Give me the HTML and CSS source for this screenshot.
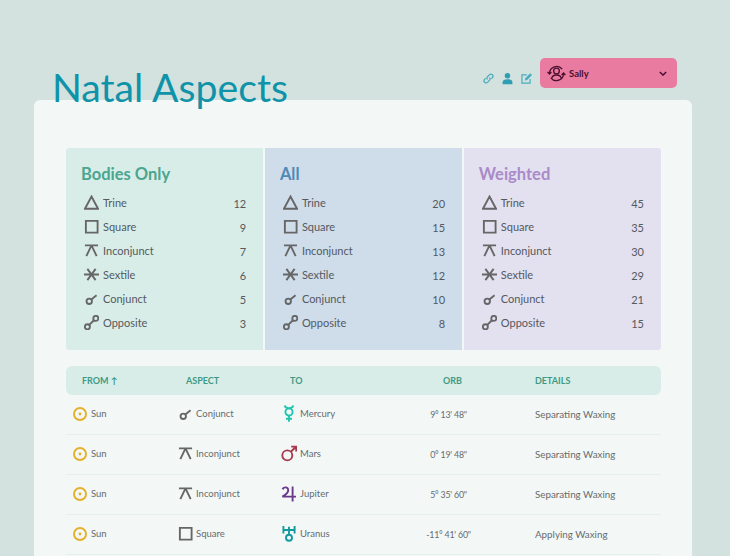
FILE: index.html
```html
<!DOCTYPE html>
<html>
<head>
    <title>Natal Aspects</title>
    <meta charset="utf-8">
    <link rel="stylesheet" href="styles.css">
</head>
<body>
    <svg class="icon-defs" width="0" height="0">
        <symbol id="trine" viewBox="0 0 16 16"><path d="M8 1.6 15 14.6H1Z"/></symbol>
        <symbol id="square" viewBox="0 0 16 16"><path d="M2 2H14.5V14.5H2Z"/></symbol>
        <symbol id="inconjunct" viewBox="0 0 16 16"><path d="M1 2.5H15M8 2.5 2.5 14M8 2.5 13.5 14"/></symbol>
        <symbol id="sextile" viewBox="0 0 16 16"><path d="M0 8H16M3.6 2 12.4 14M12.4 2 3.6 14"/></symbol>
        <symbol id="conjunct" viewBox="0 0 16 16"><circle cx="5.6" cy="11" r="2.9"/><path d="M7.8 9 13.4 4.6"/></symbol>
        <symbol id="opposite" viewBox="0 0 16 16"><circle cx="3.6" cy="12.6" r="2.7"/><circle cx="12.6" cy="3.6" r="2.7"/><path d="M5.6 10.6 10.6 5.6"/></symbol>
        <symbol id="sun" viewBox="0 0 16 16"><circle cx="8" cy="8" r="6.9"/><circle class="dot" cx="8" cy="8" r="1.6"/></symbol>
        <symbol id="mercury" viewBox="0 0 16 17"><circle cx="8" cy="7" r="3.6"/><path d="M3.6 .6C4.2 2.6 6 3.4 8 3.4S11.8 2.6 12.4 .6M8 10.6V16.8M5 13.8H11"/></symbol>
        <symbol id="mars" viewBox="0 0 16 17"><circle cx="6.3" cy="10.4" r="5"/><path d="M9.8 6.8 15 1.8M10.2 1.6H15.2V6.4"/></symbol>
        <symbol id="jupiter" viewBox="0 0 16 17"><path d="M1.6 4.4C2.4 1.8 7 1.4 7.2 5 7.4 8 4 10.2 1.4 11.6H15M11.6 1.4V16.4"/></symbol>
        <symbol id="uranus" viewBox="0 0 16 17"><circle cx="8" cy="12.8" r="3"/><path d="M8 9.8V1.8M2.4 1V8.4M13.6 1V8.4M2.4 5H13.6"/></symbol>
    </svg>

    <header class="page-head">
        <h1>Natal Aspects</h1>
        <div class="head-tools">
            <svg class="tool-icon" viewBox="0 0 16 16"><path d="M6.8 9.2C5.6 8 6 6.6 7 5.6L9 3.6C10.2 2.4 11.8 2.4 12.8 3.4S13.8 6 12.6 7.2L11.4 8.4M9.2 6.8C10.4 8 10 9.4 9 10.4L7 12.4C5.8 13.6 4.2 13.6 3.2 12.6S2.2 10 3.4 8.8L4.6 7.6"/></svg>
            <svg class="tool-icon tool-solid" viewBox="0 0 16 16"><circle cx="8" cy="4.6" r="3.4"/><path d="M2 15V12.6C2 10.2 4 9 8 9S14 10.2 14 12.6V15Z"/></svg>
            <svg class="tool-icon" viewBox="0 0 16 16"><path d="M12.4 8.6V13.6H2.4V3.6H8.4"/><path class="tool-pen" d="M6 10.6 6.6 7.6 12.6 1.6 14.8 3.8 8.8 9.8Z"/></svg>
            <div class="user-select">
                <svg class="user-icon" viewBox="0 0 20 20"><circle cx="10" cy="7.4" r="3"/><path d="M4.8 15.6C5.4 12.6 7.4 11.6 10 11.6S14.6 12.6 15.2 15.6M2.6 10A7.5 7.5 0 0 1 16 5.4M17.4 10A7.5 7.5 0 0 1 4 14.6M.6 8.4 2.6 10.6 4.6 8.4M15.4 11.6 17.4 9.4 19.4 11.6"/></svg>
                <span class="user-name">Sally</span>
                <svg class="user-caret" viewBox="0 0 10 6"><path d="M1 1 5 5 9 1"/></svg>
            </div>
        </div>
    </header>

    <main class="card">
        <section class="totals">
            <div class="total-panel panel-bodies">
                <h2>Bodies Only</h2>
                <div class="total-row"><svg class="aspect-icon"><use href="#trine"/></svg><span class="total-name">Trine</span><span class="total-num">12</span></div>
                <div class="total-row"><svg class="aspect-icon"><use href="#square"/></svg><span class="total-name">Square</span><span class="total-num">9</span></div>
                <div class="total-row"><svg class="aspect-icon"><use href="#inconjunct"/></svg><span class="total-name">Inconjunct</span><span class="total-num">7</span></div>
                <div class="total-row"><svg class="aspect-icon"><use href="#sextile"/></svg><span class="total-name">Sextile</span><span class="total-num">6</span></div>
                <div class="total-row"><svg class="aspect-icon"><use href="#conjunct"/></svg><span class="total-name">Conjunct</span><span class="total-num">5</span></div>
                <div class="total-row"><svg class="aspect-icon"><use href="#opposite"/></svg><span class="total-name">Opposite</span><span class="total-num">3</span></div>
            </div>
            <div class="total-panel panel-all">
                <h2>All</h2>
                <div class="total-row"><svg class="aspect-icon"><use href="#trine"/></svg><span class="total-name">Trine</span><span class="total-num">20</span></div>
                <div class="total-row"><svg class="aspect-icon"><use href="#square"/></svg><span class="total-name">Square</span><span class="total-num">15</span></div>
                <div class="total-row"><svg class="aspect-icon"><use href="#inconjunct"/></svg><span class="total-name">Inconjunct</span><span class="total-num">13</span></div>
                <div class="total-row"><svg class="aspect-icon"><use href="#sextile"/></svg><span class="total-name">Sextile</span><span class="total-num">12</span></div>
                <div class="total-row"><svg class="aspect-icon"><use href="#conjunct"/></svg><span class="total-name">Conjunct</span><span class="total-num">10</span></div>
                <div class="total-row"><svg class="aspect-icon"><use href="#opposite"/></svg><span class="total-name">Opposite</span><span class="total-num">8</span></div>
            </div>
            <div class="total-panel panel-weighted">
                <h2>Weighted</h2>
                <div class="total-row"><svg class="aspect-icon"><use href="#trine"/></svg><span class="total-name">Trine</span><span class="total-num">45</span></div>
                <div class="total-row"><svg class="aspect-icon"><use href="#square"/></svg><span class="total-name">Square</span><span class="total-num">35</span></div>
                <div class="total-row"><svg class="aspect-icon"><use href="#inconjunct"/></svg><span class="total-name">Inconjunct</span><span class="total-num">30</span></div>
                <div class="total-row"><svg class="aspect-icon"><use href="#sextile"/></svg><span class="total-name">Sextile</span><span class="total-num">29</span></div>
                <div class="total-row"><svg class="aspect-icon"><use href="#conjunct"/></svg><span class="total-name">Conjunct</span><span class="total-num">21</span></div>
                <div class="total-row"><svg class="aspect-icon"><use href="#opposite"/></svg><span class="total-name">Opposite</span><span class="total-num">15</span></div>
            </div>
        </section>

        <section class="aspects">
            <div class="aspect-row aspect-head">
                <div class="col-from">FROM ↑</div>
                <div class="col-aspect">ASPECT</div>
                <div class="col-to">TO</div>
                <div class="col-orb">ORB</div>
                <div class="col-details">DETAILS</div>
            </div>
            <div class="aspect-row">
                <div class="col-from"><svg class="body-icon ic-sun"><use href="#sun"/></svg>Sun</div>
                <div class="col-aspect"><svg class="aspect-icon"><use href="#conjunct"/></svg>Conjunct</div>
                <div class="col-to"><svg class="body-icon ic-mercury"><use href="#mercury"/></svg>Mercury</div>
                <div class="col-orb">9° 13' 48"</div>
                <div class="col-details">Separating Waxing</div>
            </div>
            <div class="aspect-row">
                <div class="col-from"><svg class="body-icon ic-sun"><use href="#sun"/></svg>Sun</div>
                <div class="col-aspect"><svg class="aspect-icon"><use href="#inconjunct"/></svg>Inconjunct</div>
                <div class="col-to"><svg class="body-icon ic-mars"><use href="#mars"/></svg>Mars</div>
                <div class="col-orb">0° 19' 48"</div>
                <div class="col-details">Separating Waxing</div>
            </div>
            <div class="aspect-row">
                <div class="col-from"><svg class="body-icon ic-sun"><use href="#sun"/></svg>Sun</div>
                <div class="col-aspect"><svg class="aspect-icon"><use href="#inconjunct"/></svg>Inconjunct</div>
                <div class="col-to"><svg class="body-icon ic-jupiter"><use href="#jupiter"/></svg>Jupiter</div>
                <div class="col-orb">5° 35' 60"</div>
                <div class="col-details">Separating Waxing</div>
            </div>
            <div class="aspect-row">
                <div class="col-from"><svg class="body-icon ic-sun"><use href="#sun"/></svg>Sun</div>
                <div class="col-aspect"><svg class="aspect-icon"><use href="#square"/></svg>Square</div>
                <div class="col-to"><svg class="body-icon ic-uranus"><use href="#uranus"/></svg>Uranus</div>
                <div class="col-orb">-11° 41' 60"</div>
                <div class="col-details">Applying Waxing</div>
            </div>
        </section>
    </main>
</body>
</html>
```

FILE: styles.css
```css
html, body {
    height: 100%;
    overflow: hidden;
}
body {
    margin: 0;
    background-color: #d3e2df;
    font-family: "Lato", "Liberation Sans", sans-serif;
    color: #54595f;
}
svg {
    fill: none;
    stroke: currentColor;
}
.icon-defs {
    position: absolute;
}
.page-head {
    display: flex;
    justify-content: space-between;
    align-items: flex-start;
    height: 100px;
    padding: 58px 53px 0 52px;
    box-sizing: border-box;
}
h1 {
    position: relative;
    z-index: 1;
    margin: 0;
    font-size: 39.2px;
    line-height: 58px;
    font-weight: 400;
    color: #0f93a8;
}
.head-tools {
    display: flex;
    align-items: center;
}
.tool-icon {
    width: 13px;
    height: 13px;
    margin-right: 6px;
    margin-top: 10px;
    stroke-width: 1.5;
    color: #49adc0;
}
.tool-solid {
    fill: #2f9db2;
    stroke: none;
}
.tool-pen {
    fill: #49adc0;
    stroke: none;
}
.user-select {
    display: flex;
    align-items: center;
    width: 137px;
    height: 30px;
    margin-left: 1px;
    padding: 0 9px 0 7px;
    box-sizing: border-box;
    background-color: #ea7ba0;
    border-radius: 5px;
    color: #4a1030;
}
.user-icon {
    width: 19px;
    height: 19px;
    stroke-width: 1.4;
}
.user-name {
    flex: 1;
    margin-left: 3px;
    font-size: 9.5px;
    font-weight: 700;
}
.user-caret {
    width: 8px;
    height: 5px;
    margin-right: 1px;
    stroke-width: 1.8;
}
.card {
    height: 456px;
    margin: 0 38px 0 34px;
    padding: 48px 31px 0 32px;
    box-sizing: border-box;
    background-color: #f3f8f7;
    border-radius: 6px 6px 0 0;
}
.totals {
    display: grid;
    grid-template-columns: 1fr 1fr 1fr;
    gap: 1.7px;
    height: 202px;
    margin-bottom: 16px;
}
.total-panel {
    padding: 16px 17px 0 15px;
}
.panel-bodies {
    background-color: #d9ede8;
    border-radius: 3px 0 0 3px;
}
.panel-all {
    background-color: #cfdcea;
}
.panel-weighted {
    background-color: #e3e0f0;
    border-radius: 0 3px 3px 0;
}
h2 {
    margin: 0 0 6px 0;
    font-size: 16.5px;
    line-height: 20px;
    font-weight: 700;
}
.panel-bodies h2 {
    color: #4ba58f;
}
.panel-all h2 {
    color: #4f8ab5;
}
.panel-weighted h2 {
    color: #a98bc8;
}
.total-row {
    display: flex;
    align-items: center;
    height: 24px;
    font-size: 11px;
    padding-left: 3px;
}
.total-name {
    flex: 1;
    margin-left: 4px;
}
.total-num {
    padding-top: 2px;
}
.aspect-icon {
    width: 15px;
    height: 15px;
    flex: none;
    stroke-width: 2;
    color: #666666;
}
.aspect-row {
    display: flex;
    align-items: center;
    height: 40px;
    border-bottom: 1px solid #e3f0ec;
    box-sizing: border-box;
    font-size: 9.5px;
    color: #666b70;
}
.aspect-head {
    height: 29px;
    background-color: #d9ede8;
    border: none;
    border-radius: 6px;
    font-size: 9px;
    font-weight: 700;
    color: #3f9a85;
}
.col-from, .col-aspect, .col-to {
    display: flex;
    align-items: center;
    gap: 4px;
    padding-bottom: 2px;
    box-sizing: border-box;
}
.aspect-head .col-from, .aspect-head .col-aspect, .aspect-head .col-to {
    padding-bottom: 0;
}
.col-from {
    width: 112px;
    padding-left: 7px;
}
.col-aspect {
    width: 104px;
    gap: 3px;
}
.col-to {
    width: 136px;
    gap: 3px;
}
.col-orb {
    width: 61px;
    font-size: 8.8px;
    letter-spacing: -0.2px;
    text-align: center;
}
.col-details {
    margin-left: 56px;
    padding-bottom: 1px;
    font-size: 9.8px;
}
.aspect-head .col-from {
    padding-left: 16px;
}
.aspect-head .col-aspect {
    padding-left: 8px;
}
.aspect-head .col-to {
    padding-left: 8px;
}
.aspect-head .col-orb {
    padding-left: 8px;
    box-sizing: border-box;
    font-size: 9px;
    letter-spacing: 0;
}
.aspect-head .col-details {
    padding-bottom: 0;
    font-size: 9px;
}
.body-icon {
    width: 14px;
    height: 14px;
    flex: none;
    stroke-width: 2.2;
}
.col-to .body-icon {
    width: 16px;
    height: 17px;
    margin-left: -1px;
    stroke-width: 1.9;
}
.dot {
    fill: currentColor;
    stroke: none;
}
.ic-sun {
    color: #e5b02a;
}
.ic-mercury {
    color: #1fc5ad;
}
.ic-mars {
    color: #a83a4e;
}
.ic-jupiter {
    color: #6b3a8c;
}
.ic-uranus {
    color: #129aa0;
}
```
